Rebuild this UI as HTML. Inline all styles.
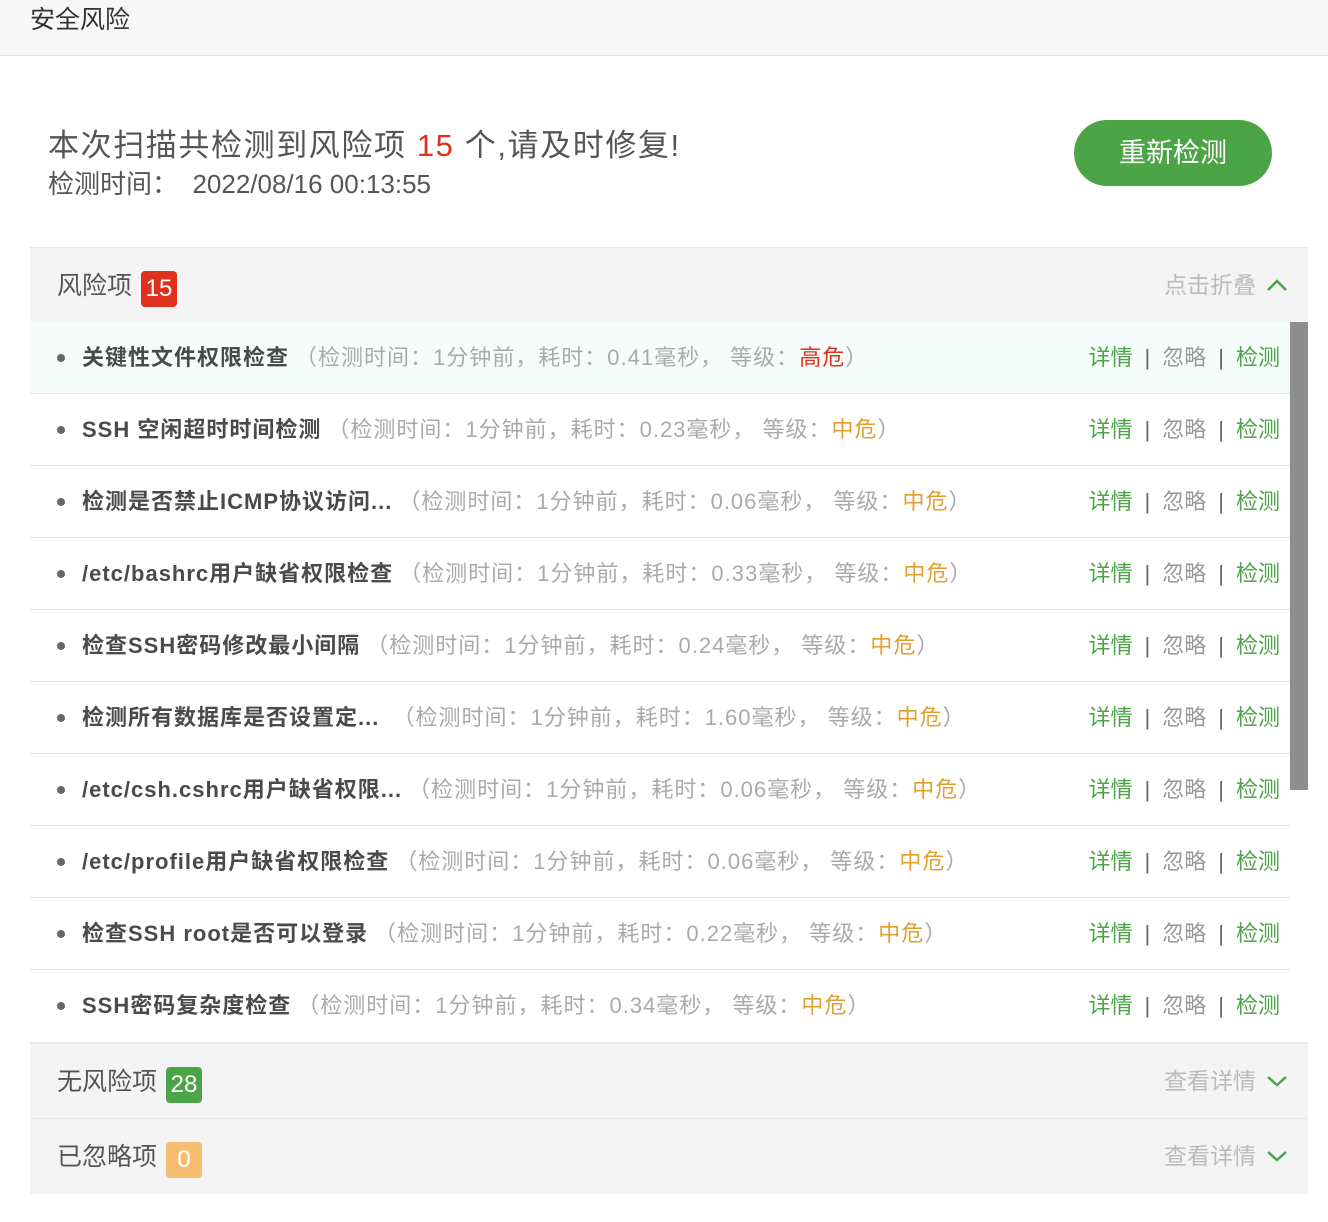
<!DOCTYPE html>
<html><head><meta charset="utf-8"><style>
*{margin:0;padding:0;box-sizing:border-box}
body{width:1328px;height:1222px;background:#fff;font-family:"Liberation Sans","Noto Sans CJK SC",sans-serif;color:#555;position:relative;overflow:hidden}
.top{position:absolute;left:0;top:0;width:1328px;height:56px;background:#f7f7f7;border-bottom:1px solid #e8e8e8}
.top span{position:absolute;left:30px;top:0px;font-size:25px;color:#333}
.sum{position:absolute;left:48px;top:120px;font-size:31px;color:#555;white-space:nowrap;letter-spacing:1.6px}
.sum b{font-weight:normal;color:#e0301e}
.time{position:absolute;left:48px;top:164px;font-size:26px;color:#555}
.btn{position:absolute;left:1074px;top:120px;width:198px;height:66px;border-radius:33px;background:#4ba446;color:#fff;font-size:27px;text-align:center;line-height:66px}
.sec{position:absolute;left:30px;width:1278px;height:76px;background:#f4f4f4;border-top:1px solid #e8e8e8}
.sec .t{position:absolute;left:27px;top:22px;font-size:25px;color:#555;line-height:32px}
.badge{display:inline-block;width:36px;height:36px;border-radius:4px;color:#fff;text-align:center;line-height:36px;font-size:24px;margin-left:9px;vertical-align:-2px}
.sec .r{position:absolute;right:20px;top:23px;font-size:23px;color:#bbb;line-height:28px}
.sec .r svg{vertical-align:1px;margin-left:10px}
.rows{position:absolute;left:30px;top:322px;width:1260px}
.row{height:72px;border-bottom:1px solid #e6e6e6;position:relative;font-size:22px;line-height:71px;white-space:nowrap}
.row:first-child{background:#f6fcfa}
.row .dot{position:absolute;left:27px;top:32px;width:8px;height:8px;border-radius:50%;background:#666}
.row .c{position:absolute;left:52px;top:0;letter-spacing:1px}
.row .n{color:#4a4a4a;font-weight:bold}
.row .m{color:#aaa;margin-left:6px}
.hi{color:#e0301e}.mid{color:#e0a030}
.row .a{position:absolute;right:10px;top:0;color:#999}
.g{color:#4ba446}
.sep{color:#666;margin:0 12px}
.sb{position:absolute;left:1290px;top:322px;width:18px;height:468px;background:#8e8e8e}
</style></head><body>
<div class="top"><span>安全风险</span></div>
<div class="sum">本次扫描共检测到风险项 <b>15</b> 个,请及时修复!</div>
<div class="time">检测时间：&nbsp; 2022/08/16 00:13:55</div>
<div class="btn">重新检测</div>
<div class="sec" style="top:247px"><div class="t">风险项<span class="badge" style="background:#e0301e">15</span></div><div class="r">点击折叠<svg width="22" height="14" viewBox="0 0 22 14"><path d="M2 12L11 3L20 12" fill="none" stroke="#4ba446" stroke-width="2.5"/></svg></div></div>
<div class="rows">
<div class="row"><i class="dot"></i><div class="c"><span class="n">关键性文件权限检查</span><span class="m">（检测时间：1分钟前，耗时：0.41毫秒， 等级：<span class="hi">高危</span>）</span></div><div class="a"><span class="g">详情</span><span class="sep">|</span>忽略<span class="sep">|</span><span class="g">检测</span></div></div>
<div class="row"><i class="dot"></i><div class="c"><span class="n">SSH 空闲超时时间检测</span><span class="m">（检测时间：1分钟前，耗时：0.23毫秒， 等级：<span class="mid">中危</span>）</span></div><div class="a"><span class="g">详情</span><span class="sep">|</span>忽略<span class="sep">|</span><span class="g">检测</span></div></div>
<div class="row"><i class="dot"></i><div class="c"><span class="n">检测是否禁止ICMP协议访问...</span><span class="m">（检测时间：1分钟前，耗时：0.06毫秒， 等级：<span class="mid">中危</span>）</span></div><div class="a"><span class="g">详情</span><span class="sep">|</span>忽略<span class="sep">|</span><span class="g">检测</span></div></div>
<div class="row"><i class="dot"></i><div class="c"><span class="n">/etc/bashrc用户缺省权限检查</span><span class="m">（检测时间：1分钟前，耗时：0.33毫秒， 等级：<span class="mid">中危</span>）</span></div><div class="a"><span class="g">详情</span><span class="sep">|</span>忽略<span class="sep">|</span><span class="g">检测</span></div></div>
<div class="row"><i class="dot"></i><div class="c"><span class="n">检查SSH密码修改最小间隔</span><span class="m">（检测时间：1分钟前，耗时：0.24毫秒， 等级：<span class="mid">中危</span>）</span></div><div class="a"><span class="g">详情</span><span class="sep">|</span>忽略<span class="sep">|</span><span class="g">检测</span></div></div>
<div class="row"><i class="dot"></i><div class="c"><span class="n">检测所有数据库是否设置定...</span><span class="m">&nbsp;（检测时间：1分钟前，耗时：1.60毫秒， 等级：<span class="mid">中危</span>）</span></div><div class="a"><span class="g">详情</span><span class="sep">|</span>忽略<span class="sep">|</span><span class="g">检测</span></div></div>
<div class="row"><i class="dot"></i><div class="c"><span class="n">/etc/csh.cshrc用户缺省权限...</span><span class="m">（检测时间：1分钟前，耗时：0.06毫秒， 等级：<span class="mid">中危</span>）</span></div><div class="a"><span class="g">详情</span><span class="sep">|</span>忽略<span class="sep">|</span><span class="g">检测</span></div></div>
<div class="row"><i class="dot"></i><div class="c"><span class="n">/etc/profile用户缺省权限检查</span><span class="m">（检测时间：1分钟前，耗时：0.06毫秒， 等级：<span class="mid">中危</span>）</span></div><div class="a"><span class="g">详情</span><span class="sep">|</span>忽略<span class="sep">|</span><span class="g">检测</span></div></div>
<div class="row"><i class="dot"></i><div class="c"><span class="n">检查SSH root是否可以登录</span><span class="m">（检测时间：1分钟前，耗时：0.22毫秒， 等级：<span class="mid">中危</span>）</span></div><div class="a"><span class="g">详情</span><span class="sep">|</span>忽略<span class="sep">|</span><span class="g">检测</span></div></div>
<div class="row" style="border-bottom:none"><i class="dot"></i><div class="c"><span class="n">SSH密码复杂度检查</span><span class="m">（检测时间：1分钟前，耗时：0.34毫秒， 等级：<span class="mid">中危</span>）</span></div><div class="a"><span class="g">详情</span><span class="sep">|</span>忽略<span class="sep">|</span><span class="g">检测</span></div></div>
</div>
<div class="sb"></div>
<div class="sec" style="top:1042px;border-top:2px solid #e8e8e8"><div class="t">无风险项<span class="badge" style="background:#4ba446">28</span></div><div class="r">查看详情<svg width="22" height="14" viewBox="0 0 22 14"><path d="M2 3L11 11L20 3" fill="none" stroke="#4ba446" stroke-width="2.5"/></svg></div></div>
<div class="sec" style="top:1118px"><div class="t">已忽略项<span class="badge" style="background:#f5bd70">0</span></div><div class="r">查看详情<svg width="22" height="14" viewBox="0 0 22 14"><path d="M2 3L11 11L20 3" fill="none" stroke="#4ba446" stroke-width="2.5"/></svg></div></div>
</body></html>
